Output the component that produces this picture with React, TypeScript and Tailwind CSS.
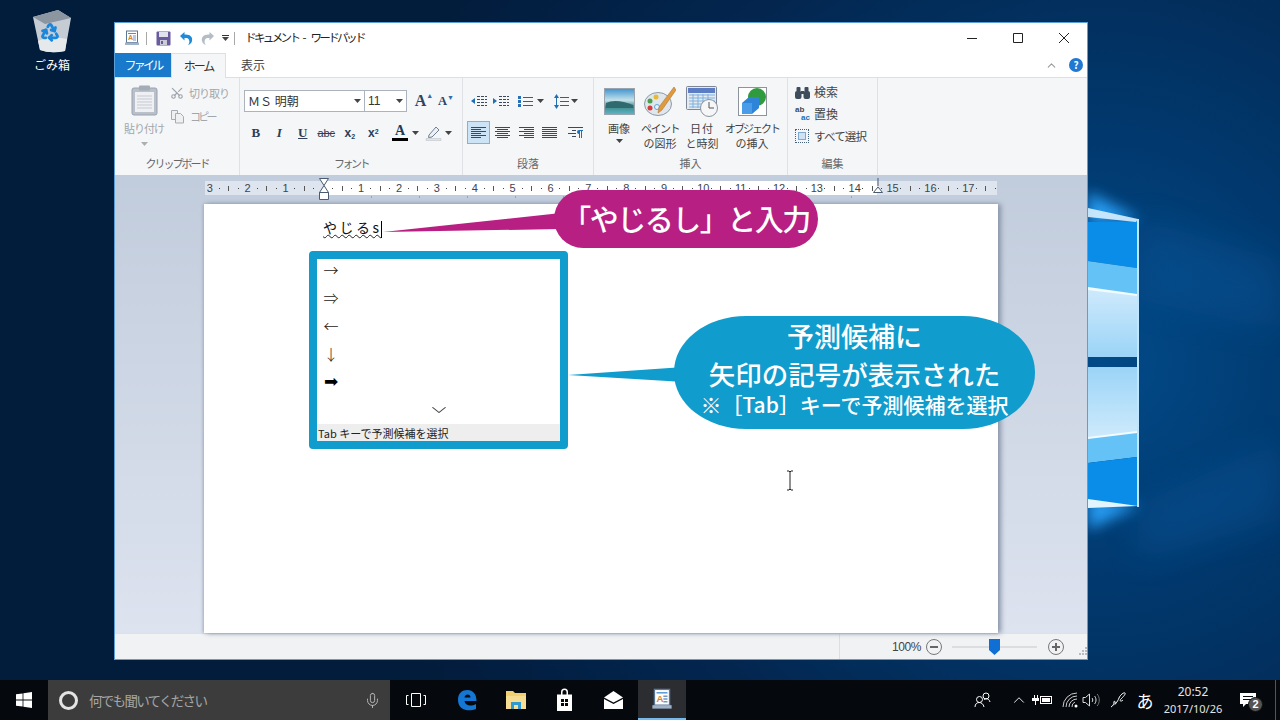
import React from "react";
import { Scissors, Recycle, Mic, ChevronUp, ChevronDown } from "lucide-react";

const font = "font-['Noto_Sans_CJK_JP','Noto_Sans',sans-serif]";

const Caret = ({ className = "" }: { className?: string }) => (
  <svg width="7" height="4" viewBox="0 0 7 4" className={className}>
    <path d="M0 0h7L3.5 4z" fill="#444" />
  </svg>
);

const Wallpaper = () => (
  <svg className="absolute inset-0" width="1280" height="680" viewBox="0 0 1280 680">
    <defs>
      <radialGradient id="sky" cx="1100" cy="360" r="740" gradientUnits="userSpaceOnUse">
        <stop offset="0" stopColor="#024a88" />
        <stop offset="0.28" stopColor="#013a70" />
        <stop offset="0.65" stopColor="#03264f" />
        <stop offset="1" stopColor="#021c3c" />
      </radialGradient>
      <linearGradient id="pane1" x1="0" y1="0" x2="0" y2="1">
        <stop offset="0" stopColor="#cfeafc" />
        <stop offset="1" stopColor="#9bd4f7" />
      </linearGradient>
      <linearGradient id="pane2" x1="0" y1="0" x2="0" y2="1">
        <stop offset="0" stopColor="#9bd4f7" />
        <stop offset="1" stopColor="#cfeafc" />
      </linearGradient>
      <filter id="glow" x="-60%" y="-60%" width="220%" height="220%">
        <feGaussianBlur stdDeviation="7" />
      </filter>
      <filter id="soft" x="-60%" y="-60%" width="220%" height="220%">
        <feGaussianBlur stdDeviation="16" />
      </filter>
    </defs>
    <rect width="1280" height="680" fill="url(#sky)" />
    <path d="M1138 219 L1280 260 L1280 330 L1138 300z" fill="#0a5ea6" opacity="0.3" filter="url(#soft)" />
    <path d="M1138 505 L1280 440 L1280 520 L1138 560z" fill="#0a5ea6" opacity="0.3" filter="url(#soft)" />
    <path d="M1088 192 L1140 219 L1088 226z" fill="#2ba6ff" opacity="0.9" filter="url(#glow)" />
    <path d="M1088 497 L1140 505 L1088 530z" fill="#2ba6ff" opacity="0.9" filter="url(#glow)" />
    <path d="M1088 222 L1137 221 V268 L1088 261z" fill="#0a8ce9" />
    <path d="M1088 261 L1137 268 V295 L1088 288z" fill="#65c2f6" />
    <path d="M1088 288 L1137 295 V357 H1088z" fill="url(#pane1)" />
    <path d="M1088 367 H1137 V432 L1088 438z" fill="url(#pane2)" />
    <path d="M1088 438 L1137 432 V457 L1088 463z" fill="#65c2f6" />
    <path d="M1088 463 L1137 457 V506 L1088 500z" fill="#0a8ce9" />
    <path d="M1088 208 L1138 219 L1136 222 L1088 217z" fill="#d7f0ff" opacity="0.9" />
    <path d="M1137 219 H1139 V507 H1137z" fill="#bfe6ff" />
    <path d="M1088 287 L1137 294 V296 L1088 290z" fill="#f2fbff" />
    <path d="M1088 437 L1137 431 V433 L1088 439z" fill="#f2fbff" />
    <path d="M1088 499 L1138 506 L1088 508z" fill="#e2f5ff" />
  </svg>
);

const RecycleBin = () => (
  <div className="absolute left-[22px] top-[8px] flex w-[60px] flex-col items-center">
    <svg width="42" height="46" viewBox="0 0 42 46">
      <path d="M2 9 L27 2 L40 10 L34 43 Q20 46 9 42z" fill="#c6ccd3" />
      <path d="M2 9 L27 2 L40 10 L14 16z" fill="#8b96a0" />
      <path d="M7 33 Q20 27 36 31 L34 43 Q20 46 9 42z" fill="#e6e9ec" />
    </svg>
    <div className="absolute left-[18px] top-[14px]">
      <Recycle size={20} color="#1b87dc" strokeWidth={3.4} />
    </div>
    <span className={`${font} mt-[3px] text-[12px] leading-[16px] text-white`}>ごみ箱</span>
  </div>
);

const WordPadIcon = ({ size = 16 }: { size?: number }) => (
  <svg width={size} height={size} viewBox="0 0 16 16">
    <rect x="2.5" y="1" width="11" height="11.5" fill="#fdfeff" stroke="#5b7796" />
    <rect x="4" y="3" width="8" height="1" fill="#4d8fd0" />
    <text x="4" y="10" fontSize="7" fontWeight="700" fill="#d9832c" fontFamily="Liberation Sans">A</text>
    <path d="M9 6h3M9 8h3M9 10h3" stroke="#6f97bf" />
    <rect x="1" y="12.5" width="14" height="2.5" fill="#9fb2c8" />
  </svg>
);

const QuickAccess = () => (
  <div className="flex h-[30px] items-center pl-[9px]">
    <WordPadIcon />
    <div className="ml-[6px] h-[13px] w-px bg-[#a8a8a8]" />
    <svg className="ml-[9px]" width="15" height="15" viewBox="0 0 15 15">
      <rect x="0.5" y="0.5" width="14" height="14" rx="1" fill="#6a5a9e" />
      <rect x="3" y="1" width="9" height="5" fill="#dfe3ee" />
      <rect x="4" y="9" width="7" height="5" fill="#c9ccd8" />
      <rect x="5" y="10" width="2" height="3" fill="#6a5a9e" />
    </svg>
    <svg className="ml-[8px]" width="15" height="14" viewBox="0 0 15 14">
      <path d="M1 5 L5.5 1 V3.5 C11 3 14 6 13 10 C12.5 12 11 13.5 9 14 C11 12 11 8 8 7 H5.5 V9.5z" fill="#1f8ad6" />
    </svg>
    <svg className="ml-[6px]" width="15" height="14" viewBox="0 0 15 14">
      <path d="M14 5 L9.5 1 V3.5 C4 3 1 6 2 10 C2.5 12 4 13.5 6 14 C4 12 4 8 7 7 H9.5 V9.5z" fill="#b4bcc6" />
    </svg>
    <div className="ml-[7px] flex flex-col items-center gap-[1px]">
      <div className="h-px w-[7px] bg-[#333]" />
      <Caret />
    </div>
    <div className="ml-[5px] h-[13px] w-px bg-[#a8a8a8]" />
    <div className={`${font} ml-[10px] flex gap-[4px] text-[11.5px] text-[#222]`}>
      <span className="tracking-[-2.6px]">ドキュメント</span>
      <span>-</span>
      <span className="tracking-[-2.6px]">ワードパッド</span>
    </div>
    <svg className="ml-auto" width="108" height="12" viewBox="0 0 108 12">
      <path d="M0 6.5h10M46.5 1.5h9v9h-9zM92 1l10 10M102 1L92 11" stroke="#222" fill="none" />
    </svg>
    <div className="w-[12px]" />
  </div>
);

const Tabs = () => (
  <div className={`${font} flex h-[24px] items-stretch text-[12px] leading-[24px]`}>
    <div className="w-[56px] bg-[#1979ca] text-center tracking-[-2.8px] text-white">ファイル</div>
    <div className="relative z-10 h-[25px] w-[55px] border-x border-t border-[#dcdfe3] bg-[#f5f6f7] text-center tracking-[-2px] text-[#333]">ホーム</div>
    <div className="w-[54px] text-center text-[#444]">表示</div>
    <div className="ml-auto flex items-center gap-[11px] pr-[4px]">
      <ChevronUp size={13} color="#9a9a9a" />
      <div className="flex h-[14px] w-[14px] items-center justify-center rounded-full bg-[#1f78d1] text-[10px] font-bold leading-none text-white">?</div>
    </div>
  </div>
);

const Group = ({ w, label, track = "", children }: { w: string; label: string; track?: string; children: React.ReactNode }) => (
  <div className={`${w} flex shrink-0 flex-col border-r border-[#dfe1e5]`}>
    <div className="h-[77px]">{children}</div>
    <div className={`${font} h-[17px] text-center text-[11px] leading-[17px] text-[#666] ${track}`}>{label}</div>
  </div>
);

const Clipboard = () => (
  <Group w="w-[125px]" label="クリップボード" track="tracking-[-2px]">
    <div className={`${font} flex text-[11px] text-[#a3a6aa]`}>
      <div className="ml-[8px] flex w-[42px] flex-col items-center pt-[7px]">
        <svg width="27" height="31" viewBox="0 0 27 31">
          <rect x="1" y="3" width="25" height="27" rx="2" fill="#b9c0ca" stroke="#9aa2ae" />
          <rect x="4" y="7" width="19" height="20" fill="#eef0f3" />
          <path d="M6 11h15M6 14h15M6 17h15M6 20h15M6 23h15" stroke="#c5cad2" />
          <rect x="8" y="0.5" width="11" height="5" rx="1" fill="#a4acb8" />
        </svg>
        <span className="mt-[3px] whitespace-nowrap leading-[18px] tracking-[-1px]">貼り付け</span>
        <Caret className="mt-[5px] opacity-40" />
      </div>
      <div className="ml-[5px] flex flex-col pt-[7px]">
        <div className="flex h-[16px] items-center gap-[5px]">
          <Scissors size={14} color="#9ea4ac" className="-rotate-90" />
          <span className="tracking-[-1px]">切り取り</span>
        </div>
        <div className="mt-[7px] flex h-[16px] items-center gap-[5px]">
          <svg width="15" height="15" viewBox="0 0 15 15" fill="#eef0f2" stroke="#a7acb3">
            <path d="M1.5 1.5h6v9h-6z" />
            <path d="M5.5 4.5h5l3 3v6.500h-8z" />
          </svg>
          <span className="tracking-[-2.8px]">コピー</span>
        </div>
      </div>
    </div>
  </Group>
);

const FontGroup = () => (
  <Group w="w-[223px]" label="フォント" track="tracking-[-2.5px]">
    <div className="pl-[4px] pt-[12px]">
      <div className="flex h-[22px] items-center">
        <div className={`${font} flex h-[22px] w-[121px] items-center justify-between border border-[#abb3bd] bg-white pl-[3px] pr-[3px] text-[12px] text-[#333]`}>
          <span>ＭＳ 明朝</span>
          <Caret />
        </div>
        <div className="-ml-px flex h-[22px] w-[43px] items-center justify-between border border-[#abb3bd] bg-white pl-[3px] pr-[3px] font-['Liberation_Sans'] text-[12px] text-[#333]">
          <span>11</span>
          <Caret />
        </div>
        <div className="ml-[6px] flex w-[22px] items-start justify-center font-['Liberation_Serif'] text-[16px] font-bold leading-none text-[#2c4563]">
          A<span className="text-[7px] text-[#2c6fb0]">▲</span>
        </div>
        <div className="flex w-[22px] items-start justify-center font-['Liberation_Serif'] text-[12.500px] font-bold leading-none text-[#2c4563]">
          A<span className="text-[7px] text-[#2c6fb0]">▼</span>
        </div>
      </div>
      <div className="mt-[10px] flex h-[22px] items-center font-['Liberation_Serif'] font-bold text-[#2b3f58]">
        <span className="w-[23.5px] text-center text-[13px]">B</span>
        <span className="w-[23.5px] text-center text-[13px] italic">I</span>
        <span className="w-[23.5px] text-center text-[13px] underline">U</span>
        <span className="w-[23.5px] text-center font-['Liberation_Sans'] text-[11px] font-normal line-through">abc</span>
        <span className="w-[23.5px] text-center font-['Liberation_Sans'] text-[12px]">x<sub className="text-[7px]">2</sub></span>
        <span className="w-[23.5px] text-center font-['Liberation_Sans'] text-[12px]">x<sup className="text-[7px]">2</sup></span>
        <div className="ml-[7px] flex w-[16px] flex-col items-center">
          <span className="font-['Liberation_Serif'] text-[14px] leading-[12px] text-[#203a5c]">A</span>
          <div className="mt-[1px] h-[3px] w-[16px] bg-black" />
        </div>
        <Caret className="ml-[4px]" />
        <svg className="ml-[6px]" width="17" height="16" viewBox="0 0 17 16">
          <path d="M4 10 L11 2 L14 5 L7 12 L3.500 12.500z" fill="#eef2f6" stroke="#6f7f92" />
          <path d="M1 13.500h15V15.500H1z" fill="#e1e4e8" stroke="#b7bcc4" strokeWidth="0.5" />
        </svg>
        <Caret className="ml-[3px]" />
      </div>
    </div>
  </Group>
);

const Lines = ({ rows }: { rows: [number, number][] }) => (
  <svg width="15" height="13" viewBox="0 0 15 13" stroke="#3a4a5c">
    {rows.map(([x, w], i) => (
      <path key={i} d={`M${x} ${1.5 + i * 2}h${w}`} />
    ))}
  </svg>
);

const full: [number, number][] = [[0, 15], [0, 15], [0, 15], [0, 15], [0, 15], [0, 15]];

const Paragraph = () => (
  <Group w="w-[131px]" label="段落">
    <div className="pl-[4px] pt-[16px]">
      <div className="flex h-[14px] items-center">
        <svg className="ml-[4px]" width="16" height="13" viewBox="0 0 16 13">
          <path d="M6 1.500h10M6 4.500h10M6 7.500h10M6 10.500h10" stroke="#3a4a5c" strokeDasharray="3 1" />
          <path d="M0 6 L4 3 V9z" fill="#1f6fb5" />
        </svg>
        <svg className="ml-[6px]" width="16" height="13" viewBox="0 0 16 13">
          <path d="M6 1.500h10M6 4.500h10M6 7.500h10M6 10.500h10" stroke="#3a4a5c" strokeDasharray="3 1" />
          <path d="M4 6 L0 3 V9z" fill="#1f6fb5" />
        </svg>
        <svg className="ml-[9px]" width="15" height="13" viewBox="0 0 15 13">
          <path d="M5 2.500h10M5 6.500h10M5 10.500h10" stroke="#4a5a6c" />
          <path d="M0 1h3v3H0zM0 5h3v3H0zM0 9h3v3H0z" fill="#2a6fb5" />
        </svg>
        <Caret className="ml-[4px]" />
        <svg className="ml-[10px]" width="15" height="15" viewBox="0 0 15 15">
          <path d="M6 3.500h9M6 7.500h9M6 11.500h9" stroke="#4a5a6c" />
          <path d="M2.500 0 L5 4H0zM2.500 15 L0 11H5zM2 4h1v7H2z" fill="#1f6fb5" />
        </svg>
        <Caret className="ml-[2px]" />
      </div>
      <div className="mt-[13px] flex h-[23px] items-center">
        <div className="flex h-[23px] w-[23px] items-center justify-center border border-[#7fb2dc] bg-[#cde4f7]">
          <Lines rows={[[0, 15], [0, 10], [0, 15], [0, 10], [0, 15], [0, 10]]} />
        </div>
        <div className="ml-[5px]"><Lines rows={[[0, 15], [2, 11], [0, 15], [2, 11], [0, 15], [2, 11]]} /></div>
        <div className="ml-[9px]"><Lines rows={[[0, 15], [5, 10], [0, 15], [5, 10], [0, 15], [5, 10]]} /></div>
        <div className="ml-[8px]"><Lines rows={full} /></div>
        <svg className="ml-[11px]" width="15" height="13" viewBox="0 0 15 13">
          <path d="M0 1.500h15M4 4.500h4M0 7.500h8M4 10.500h4" stroke="#3a4a5c" />
          <path d="M10 4h5v1h-1v7h-1V5h-1v7h-1V8a2 2 0 0 1 0-4z" fill="#1f6fb5" />
        </svg>
      </div>
    </div>
  </Group>
);

const InsertItem = ({ w, icon, lines }: { w: string; icon: React.ReactNode; lines: React.ReactNode[] }) => (
  <div className={`${w} flex flex-col items-center`}>
    <div className="flex h-[36px] items-center justify-center">{icon}</div>
    <div className={`${font} mt-[2px] flex flex-col items-center whitespace-nowrap text-[11px] leading-[15px] text-[#444]`}>
      {lines.map((l, i) => (
        <span key={i}>{l}</span>
      ))}
    </div>
  </div>
);

const Insert = () => (
  <Group w="w-[194px]" label="挿入">
    <div className="flex pl-[2px] pt-[5px]">
      <InsertItem
        w="w-[46px]"
        lines={["画像", <Caret key="c" className="mt-[3px]" />]}
        icon={
          <svg width="31" height="27" viewBox="0 0 31 27">
            <defs>
              <linearGradient id="photo" x1="0" y1="0" x2="0" y2="1">
                <stop offset="0" stopColor="#3f92cf" />
                <stop offset="0.45" stopColor="#c4e2ea" />
                <stop offset="0.7" stopColor="#3f8a8c" />
                <stop offset="1" stopColor="#5eb7c9" />
              </linearGradient>
            </defs>
            <rect x="0.5" y="0.5" width="30" height="26" fill="url(#photo)" stroke="#9aa4ae" />
            <path d="M2 15 Q12 10 29 17 V20 H2z" fill="#2e6a6e" />
          </svg>
        }
      />
      <InsertItem
        w="w-[36px]"
        lines={[<span key="a" className="tracking-[-1.500px]">ペイント</span>, "の図形"]}
        icon={
          <svg width="32" height="31" viewBox="0 0 32 31">
            <ellipse cx="14" cy="18" rx="13.500" ry="11.500" fill="#dfe6ec" stroke="#8f9aa6" />
            <circle cx="6" cy="22" r="2.500" fill="#d83b3b" />
            <circle cx="6" cy="15" r="2.500" fill="#4aa14a" />
            <circle cx="12" cy="11" r="2.500" fill="#e6b93a" />
            <circle cx="13" cy="21" r="2.500" fill="#eaf3f9" stroke="#5aa7dd" />
            <path d="M30 1 L32 4 L18 24 L14 27 L15 21z" fill="#e09a3e" stroke="#a5692a" strokeWidth="0.5" />
          </svg>
        }
      />
      <InsertItem
        w="w-[48px]"
        lines={[<span key="a" className="tracking-[1px]">日付</span>, "と時刻"]}
        icon={
          <svg width="32" height="32" viewBox="0 0 32 32">
            <rect x="0.5" y="1.500" width="30" height="23" rx="1" fill="#e4eaf1" stroke="#7c8694" />
            <rect x="2" y="3" width="27" height="5" fill="#5c7cc4" />
            <path d="M3 10h26M3 13h26M3 16h26M3 19h26M3 22h26M7 9v14M12 9v14M17 9v14M22 9v14" stroke="#7fb1df" />
            <circle cx="23" cy="23" r="8.500" fill="#f5f6f7" stroke="#8c949e" />
            <path d="M23 17v6h5" stroke="#555" fill="none" />
          </svg>
        }
      />
      <InsertItem
        w="w-[52px]"
        lines={[<span key="a" className="tracking-[-2px]">オブジェクト</span>, "の挿入"]}
        icon={
          <svg width="31" height="31" viewBox="0 0 31 31">
            <rect x="1.500" y="1.500" width="28" height="28" fill="#fff" stroke="#8d949c" />
            <circle cx="20" cy="11" r="9" fill="#2f9a3e" />
            <path d="M5 17 L12 11 H22 V22 L15 28 H5z" fill="#2d84d8" />
            <path d="M5 17 H15 V28 H5z" fill="#4a9ce8" />
          </svg>
        }
      />
    </div>
  </Group>
);

const EditGroup = () => (
  <Group w="w-[90px]" label="編集">
    <div className={`${font} flex flex-col gap-[6px] pl-[7px] pt-[6px] text-[12px] leading-[16px] text-[#444]`}>
      <div className="flex items-center gap-[4px]">
        <svg width="15" height="13" viewBox="0 0 15 13" fill="#3f4c5c">
          <rect x="0" y="5" width="6.500" height="8" rx="2" />
          <rect x="8.500" y="5" width="6.500" height="8" rx="2" />
          <rect x="1.500" y="1" width="4" height="5" rx="1" />
          <rect x="9.500" y="1" width="4" height="5" rx="1" />
          <rect x="6" y="5" width="3" height="3" />
        </svg>
        <span>検索</span>
      </div>
      <div className="flex items-center gap-[4px]">
        <div className="flex w-[15px] flex-col font-['Liberation_Sans'] text-[8px] font-bold leading-[8px] text-[#3a4a5c]">
          <span>ab</span>
          <span className="text-right text-[#1f6fb5]">ac</span>
        </div>
        <span>置換</span>
      </div>
      <div className="flex items-center gap-[4px]">
        <div className="flex h-[14px] w-[14px] items-center justify-center border border-dotted border-[#45607d]">
          <div className="h-[8px] w-[8px] border border-[#7fa9d0] bg-[#cfe3f5]" />
        </div>
        <span className="ml-[1px] text-[11.500px] tracking-[-0.8px]">すべて選択</span>
      </div>
    </div>
  </Group>
);

const Ruler = () => (
  <div className="ml-[90px] flex h-[14px] w-[792px] overflow-hidden bg-[linear-gradient(90deg,#dfe5ee_118px,#fff_118px,#fff_672px,#dfe5ee_672px)] font-['Liberation_Sans'] text-[11px] leading-[14px] text-[#3c4450]">
    {[3, 2, 1, 0, 1, 2, 3, 4, 5, 6, 7, 8, 9, 10, 11, 12, 13, 14, 15, 16, 17].map((n, i) => (
      <div key={i} className="flex w-[37.87px] shrink-0 items-center">
        <span className="w-[9.47px] shrink-0 text-center">{n === 0 ? "" : n}</span>
        <span className="flex w-[9.47px] shrink-0 justify-center"><span className="h-px w-px bg-[#444]" /></span>
        <span className="flex w-[9.47px] shrink-0 justify-center"><span className="h-[5px] w-px bg-[#555]" /></span>
        <span className="flex w-[9.47px] shrink-0 justify-center"><span className="h-px w-px bg-[#444]" /></span>
      </div>
    ))}
  </div>
);

const RulerMarks = () => (
  <>
    <svg className="absolute left-[202px] top-[3px]" width="14" height="24" viewBox="0 0 14 24" fill="#fff" stroke="#4a5a70">
      <path d="M2.500 0.500h9L7 7.500zM7 7.500L2.500 14.500h9zM2.500 14.500h9v7h-9z" />
    </svg>
    <svg className="absolute left-[756px] top-[3px]" width="14" height="18" viewBox="0 0 14 18" fill="#fff" stroke="#4a5a70">
      <path d="M7 0v8M2.500 14.500L7 9l4.500 5.500z" />
    </svg>
    {[256, 304, 352, 400, 448, 496, 544, 592, 640, 688, 736].map((x) => (
      <div key={x} className="absolute top-[21px] h-[2px] w-px bg-[#9aa3af]" style={{ left: x }} />
    ))}
  </>
);

const Prediction = () => (
  <div className="absolute left-[105px] top-[47px] flex h-[198px] w-[259px] flex-col rounded-[4px] border-[8px] border-[#109ccd] bg-white">
    <div className="-mt-[3px] flex-1 pl-[6px] text-[#222]">
      {["→", "⇒", "←", "↓", "➡"].map((a, i) => (
        <div
          key={a}
          className={`flex h-[28px] w-[16px] items-center justify-center ${i === 4 ? "font-['DejaVu_Sans'] text-[17px] text-black" : `${font} text-[15px] font-light`}`}
        >
          {a}
        </div>
      ))}
      <div className="-ml-[6px] mt-[2px] flex h-[24px] items-center justify-center">
        <ChevronDown size={20} color="#444" strokeWidth={1.2} className="scale-x-125" />
      </div>
    </div>
    <div className={`${font} h-[17px] bg-[#eeeeee] pl-[1px] text-[11px] leading-[18px] text-[#222]`}>Tab キーで予測候補を選択</div>
  </div>
);

const Callouts = () => (
  <>
    <svg className="absolute left-[179px] top-[6px]" width="180" height="24" viewBox="0 0 180 24">
      <path d="M0 22 L178 3 V19z" fill="#b81f82" />
    </svg>
    <div className={`${font} absolute -top-[14px] left-[350px] flex h-[58px] w-[264px] items-center justify-center rounded-[29px] bg-[#b81f82] text-[29px] font-medium tracking-[-1.500px] text-white`}>
      「やじるし」と入力
    </div>
    <svg className="absolute left-[364px] top-[160px]" width="116" height="20" viewBox="0 0 116 20">
      <path d="M0 11 L116 3 V18z" fill="#109ccd" />
    </svg>
    <div className={`${font} absolute left-[470px] top-[112px] flex h-[113px] w-[361px] flex-col items-center rounded-[72px/56px] bg-[#109ccd] pt-[1px] font-medium text-white`}>
      <span className="text-[27px] leading-[38px]">予測候補に</span>
      <span className="text-[26.500px] leading-[38px]">矢印の記号が表示された</span>
      <span className="text-[21px] leading-[22px]">※［Tab］キーで予測候補を選択</span>
    </div>
  </>
);

const Editor = () => (
  <div className="relative h-[458px] bg-[linear-gradient(180deg,#c1ccdc,#dde3ef)] pt-[6px]">
    <Ruler />
    <RulerMarks />
    <div className="absolute bottom-0 left-[89px] top-[29px] w-[794px] bg-white shadow-[3px_0_5px_#8995a8,-1px_0_3px_#a5afc0]">
      <div className={`${font} pl-[119px] pt-[13px] text-[14px] leading-[20px] tracking-[2.500px] text-[#111]`}>
        <span className="underline decoration-wavy decoration-[#222] decoration-1">やじるs</span>
        <span className="ml-[-1px] inline-block h-[17px] w-px bg-black align-middle" />
      </div>
      <Prediction />
      <Callouts />
    </div>
    <svg className="absolute left-[670px] top-[295px]" width="10" height="21" viewBox="0 0 10 21" stroke="#222" fill="none">
      <path d="M2 1h2l1 1 1-1h2M5 2v17M2 20h2l1-1 1 1h2" />
    </svg>
  </div>
);

const StatusBar = () => (
  <div className="flex h-[26px] items-center border-t border-[#dfe1e4] bg-[#f1f2f4]">
    <div className="ml-[724px] h-[25px] w-px bg-[#dcdee1]" />
    <span className="ml-[52px] w-[26px] whitespace-nowrap font-['Liberation_Sans'] text-[12px] tracking-[-0.4px] text-[#444]">100%</span>
    <div className="ml-[8px] flex h-[16px] w-[16px] items-center justify-center rounded-full border border-[#777]">
      <div className="h-[2px] w-[8px] bg-[#666]" />
    </div>
    <div className="relative ml-[10px] h-[2px] w-[85px] bg-[#dcdde0]">
      <svg className="absolute left-[37px] -top-[7px]" width="11" height="16" viewBox="0 0 11 16">
        <path d="M0 0h11v11l-5.500 5L0 11z" fill="#0f6fd4" />
      </svg>
    </div>
    <div className="relative ml-[11px] flex h-[16px] w-[16px] items-center justify-center rounded-full border border-[#777]">
      <div className="h-[2px] w-[8px] bg-[#666]" />
      <div className="absolute h-[8px] w-[2px] bg-[#666]" />
    </div>
    <svg className="ml-[14px] mt-[10px]" width="9" height="9" viewBox="0 0 9 9" fill="#b8bcc2">
      <path d="M7 0h2v2H7zM4 3h2v2H4zM7 3h2v2H7zM1 6h2v2H1zM4 6h2v2H4zM7 6h2v2H7z" />
    </svg>
  </div>
);

const Taskbar = () => (
  <div className="flex h-10 items-stretch bg-[#05080d] text-white">
    <div className="flex w-12 items-center justify-center">
      <svg width="16" height="16" viewBox="0 0 16 16" fill="#fff">
        <path d="M0 2.300 L6.600 1.400 V7.500 H0zM7.400 1.300 L16 0 V7.500 H7.400zM0 8.400 H6.600 V14.600 L0 13.700zM7.400 8.400 H16 V16 L7.400 14.700z" />
      </svg>
    </div>
    <div className="flex w-[342px] items-center bg-[#3c3c3c]">
      <div className="ml-[11px] h-[19px] w-[19px] rounded-full border-[3px] border-[#e4e4e4]" />
      <span className={`${font} ml-[11px] text-[13.500px] tracking-[-1.700px] text-[#a5a5a5]`}>何でも聞いてください</span>
      <Mic size={17} color="#b5b5b5" strokeWidth={1.4} className="ml-auto mr-[9px]" />
    </div>
    <div className="flex w-[52px] items-center justify-center">
      <svg width="20" height="16" viewBox="0 0 20 16" stroke="#fff" fill="none">
        <path d="M5.500 1.500h9v13h-9zM2.500 3.500H0.500v9h2M17.500 3.500h2v9h-2" />
      </svg>
    </div>
    <div className="flex w-[49px] items-center justify-center">
      <svg width="20" height="22" viewBox="0 0 20 22">
        <path d="M1 11 C1 4 5 1 10.500 1 C16 1 19.500 5 19.500 12 H7.500 C8 16.500 13.500 18 19 15 V20 C12 23 1 21.500 1 11z M7.500 8.500 H13.500 C13.500 4.500 8 4.500 7.500 8.500z" fill="#1377d3" fillRule="evenodd" />
      </svg>
    </div>
    <div className="flex w-[49px] items-center justify-center">
      <svg width="22" height="20" viewBox="0 0 22 20">
        <path d="M1 1h7l2 2h11v16H1z" fill="#f2cf6f" />
        <path d="M1 6h20v13H1z" fill="#f6dd92" />
        <path d="M6 19v-7h10v7h-3v-4H9v4z" fill="#2e9ad0" />
      </svg>
    </div>
    <div className="flex w-[49px] items-center justify-center">
      <svg width="17" height="24" viewBox="0 0 17 24" fill="#fff">
        <path d="M5 7V4a3.500 3.500 0 0 1 7 0v3h-1.500V4a2 2 0 0 0-4 0v3z" />
        <path d="M1 6.500h15V23H1z" />
        <path d="M5 11h3v3H5zM9 11h3v3H9zM5 15h3v3H5zM9 15h3v3H9z" fill="#05080d" />
      </svg>
    </div>
    <div className="flex w-[49px] items-center justify-center">
      <svg width="19" height="19" viewBox="0 0 19 19" fill="#fff">
        <path d="M0 6.500 L9.500 0 L19 6.500 L9.500 11.500z" />
        <path d="M0 8 L9.500 13 L19 8 V18 H0z" />
      </svg>
    </div>
    <div className="flex w-[48px] items-center justify-center border-b-[2px] border-[#76b9ed] bg-[#2b2d31]">
      <WordPadIcon size={22} />
    </div>
    <div className="flex-1" />
    <div className={`${font} flex items-center`}>
      <svg className="mr-[6px] w-[36px]" height="16" viewBox="-10 0 36 16" stroke="#fff" fill="none">
        <circle cx="11" cy="4" r="3" />
        <circle cx="4.500" cy="7.500" r="3" />
        <path d="M0 15c0-6 8-6 9 0M9 8c1-2 5-2 6 2" />
      </svg>
      <ChevronUp size={18} color="#fff" strokeWidth={1.2} className="mx-[3px]" />
      <svg className="ml-[1px] mr-[7px]" width="20" height="12" viewBox="0 0 20 12" fill="#fff">
        <path d="M0 4h2V1h1v3h2V1h1v3h1v3H4v4H3V7H0z" />
        <rect x="8.500" y="2.500" width="11" height="7" fill="#05080d" stroke="#fff" />
        <rect x="10" y="4" width="8" height="4" />
      </svg>
      <svg className="mx-[3px]" width="17" height="16" viewBox="0 0 17 16" stroke="#ccc" fill="none">
        <path d="M1 15A14 14 0 0 1 15 1M4 15A11 11 0 0 1 15 4M7 15A8 8 0 0 1 15 7M10 15A5 5 0 0 1 13 10" />
        <circle cx="14" cy="14" r="1.500" fill="#fff" stroke="none" />
      </svg>
      <svg className="mr-[7px]" width="18" height="14" viewBox="0 0 18 14" stroke="#ddd" fill="none">
        <path d="M1 4.500h2.500L7.500 1v12L3.500 9.500H1z" />
        <path d="M10 5c1 1 1 3 0 4M12.500 3c2 2 2 6 0 8" />
        <path d="M15 1c3 3 3 9 0 12" stroke="#777" />
      </svg>
      <svg className="mx-[3px]" width="18" height="18" viewBox="0 0 18 18" stroke="#fff" fill="none">
        <path d="M1 16c2-1 3-3 3-5s2 0 1 2 3-3 4-6 5-6 6-5-2 4-4 6 0 3 2 1" />
      </svg>
      <span className="ml-[2px] w-[24px] text-center text-[17px] leading-none text-white">あ</span>
      <div className="mr-[6px] flex w-[72px] flex-col items-center font-['Noto_Sans'] text-[11px] leading-[17px] text-[#e4e4e4]">
        <span className="text-[12px]">20:52</span>
        <span>2017/10/26</span>
      </div>
      <div className="relative flex w-[26px] justify-center">
        <svg width="16" height="15" viewBox="0 0 16 15">
          <path d="M0 0h16v11H6l-3 3v-3H0z" fill="#fff" />
          <path d="M3 3.500h10M3 6.500h10" stroke="#05080d" />
        </svg>
        <div className="absolute left-[13px] top-[4px] flex h-[15px] w-[15px] items-center justify-center rounded-full border border-[#111] bg-[#555] font-['Liberation_Sans'] text-[11px] font-bold text-white">2</div>
      </div>
      <div className="ml-[14px] h-full w-px bg-[#555]" />
      <div className="w-[4px]" />
    </div>
  </div>
);

export default function App() {
  return (
    <div className="flex h-[720px] w-[1280px] flex-col overflow-hidden bg-[#021c3c]">
      <div className="relative h-[680px]">
        <Wallpaper />
        <RecycleBin />
        <div className="absolute left-[114px] top-[22px] h-[638px] w-[974px] border border-[#5a9fd6] bg-white">
          <QuickAccess />
          <Tabs />
          <div className="flex h-[98px] border-t border-[#dcdfe3] bg-[#f5f6f7]">
            <Clipboard />
            <FontGroup />
            <Paragraph />
            <Insert />
            <EditGroup />
          </div>
          <Editor />
          <StatusBar />
        </div>
      </div>
      <Taskbar />
    </div>
  );
}
